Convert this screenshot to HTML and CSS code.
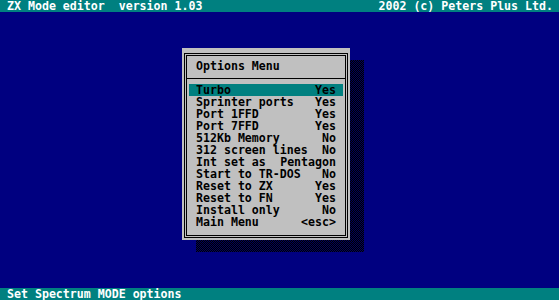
FILE: index.html
```html
<!DOCTYPE html>
<html lang="en">
<head>
    <meta charset="UTF-8">
    <title>ZX Mode editor</title>
    <link rel="stylesheet" href="styles.css">
</head>
<body>
    <div class="screen">
        <div class="bar">
            <span>ZX Mode editor  version 1.03</span>
            <span>2002 (c) Peters Plus Ltd.</span>
        </div>

        <div class="desk">
            <div class="dialog">
                <div class="frame">
                    <div class="title">Options Menu</div>
                    <div class="rule"></div>
                    <ul class="menu">
                        <li class="item active"><span>Turbo</span><span>Yes</span></li>
                        <li class="item"><span>Sprinter ports</span><span>Yes</span></li>
                        <li class="item"><span>Port 1FFD</span><span>Yes</span></li>
                        <li class="item"><span>Port 7FFD</span><span>Yes</span></li>
                        <li class="item"><span>512Kb Memory</span><span>No</span></li>
                        <li class="item"><span>312 screen lines</span><span>No</span></li>
                        <li class="item"><span>Int set as</span><span>Pentagon</span></li>
                        <li class="item"><span>Start to TR-DOS</span><span>No</span></li>
                        <li class="item"><span>Reset to ZX</span><span>Yes</span></li>
                        <li class="item"><span>Reset to FN</span><span>Yes</span></li>
                        <li class="item"><span>Install only</span><span>No</span></li>
                        <li class="item"><span>Main Menu</span><span>&lt;esc&gt;</span></li>
                    </ul>
                </div>
            </div>
        </div>

        <div class="bar">
            <span>Set Spectrum MODE options</span>
        </div>
    </div>
</body>
</html>
```

FILE: styles.css
```css
body {
    margin: 0;
    background: #000080;
    font-family: "DejaVu Sans Mono", "Liberation Mono", monospace;
    font-weight: bold;
    font-size: 11.6px;
    line-height: 12px;
    color: #000;
}
.screen {
    width: 559px;
    height: 300px;
    display: flex;
    flex-direction: column;
    overflow: hidden;
}
.bar {
    height: 12px;
    background: #008080;
    color: #fff;
    padding: 0 6px 0 7px;
    display: flex;
    justify-content: space-between;
    white-space: pre;
}
.desk {
    flex: 1;
    padding: 36px 0 0 182px;
}
.dialog {
    position: relative;
    width: 164px;
    padding: 5px 2px 2px;
    background: #c0c0c0;
}
/* dithered drop shadow */
.dialog::before {
    content: "";
    position: absolute;
    left: 14px;
    top: 12px;
    width: 100%;
    height: 100%;
    z-index: -1;
    background: repeating-conic-gradient(#000 0 25%, #00005c 0 50%) 0 0 / 2px 2px;
}
.frame {
    border: 3px double #000;
    padding: 4px 2px 7px;
}
.title {
    height: 12px;
    padding-left: 7px;
}
.rule {
    height: 1px;
    margin: 6px -2px 5px;
    background: #000;
}
.menu {
    list-style: none;
    margin: 0;
    padding: 0;
}
.item {
    height: 12px;
    padding: 0 7px;
    display: flex;
    justify-content: space-between;
    white-space: pre;
}
.item.active {
    background: #008080;
}
```
